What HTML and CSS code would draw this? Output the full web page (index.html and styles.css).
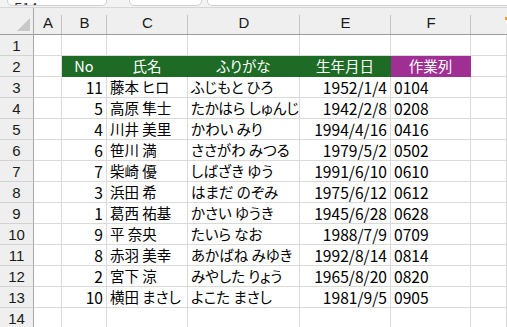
FILE: index.html
```html
<!DOCTYPE html>
<html lang="ja">
<head>
<meta charset="utf-8">
<link rel="stylesheet" href="styles.css">
</head>
<body>
<div class="topbar">
  <div class="box namebox"><span class="cut">E14</span></div>
  <div class="box fxbox"></div>
  <div class="box formula"></div>
</div>
<div class="sheet">
  <div class="corner"><span class="tri"></span></div>
  <div class="colhead">A</div>
  <div class="colhead">B</div>
  <div class="colhead">C</div>
  <div class="colhead">D</div>
  <div class="colhead">E</div>
  <div class="colhead">F</div>
  <div class="colhead last"><span class="mark"></span></div>

  <div class="rh">1</div><div class="c"></div><div class="c"></div><div class="c"></div><div class="c"></div><div class="c"></div><div class="c"></div><div class="c"></div>

  <div class="rh">2</div><div class="c"></div>
  <div class="c g ctr">No</div><div class="c g ctr">氏名</div><div class="c g ctr">ふりがな</div><div class="c g ctr">生年月日</div><div class="c p ctr">作業列</div><div class="c"></div>

  <div class="rh">3</div><div class="c"></div><div class="c r n">11</div><div class="c">藤本 ヒロ</div><div class="c">ふじもと ひろ</div><div class="c r n">1952/1/4</div><div class="c n">0104</div><div class="c"></div>
  <div class="rh">4</div><div class="c"></div><div class="c r n">5</div><div class="c">高原 隼士</div><div class="c">たかはら しゅんじ</div><div class="c r n">1942/2/8</div><div class="c n">0208</div><div class="c"></div>
  <div class="rh">5</div><div class="c"></div><div class="c r n">4</div><div class="c">川井 美里</div><div class="c">かわい みり</div><div class="c r n">1994/4/16</div><div class="c n">0416</div><div class="c"></div>
  <div class="rh">6</div><div class="c"></div><div class="c r n">6</div><div class="c">笹川 満</div><div class="c">ささがわ みつる</div><div class="c r n">1979/5/2</div><div class="c n">0502</div><div class="c"></div>
  <div class="rh">7</div><div class="c"></div><div class="c r n">7</div><div class="c">柴崎 優</div><div class="c">しばざき ゆう</div><div class="c r n">1991/6/10</div><div class="c n">0610</div><div class="c"></div>
  <div class="rh">8</div><div class="c"></div><div class="c r n">3</div><div class="c">浜田 希</div><div class="c">はまだ のぞみ</div><div class="c r n">1975/6/12</div><div class="c n">0612</div><div class="c"></div>
  <div class="rh">9</div><div class="c"></div><div class="c r n">1</div><div class="c">葛西 祐基</div><div class="c">かさい ゆうき</div><div class="c r n">1945/6/28</div><div class="c n">0628</div><div class="c"></div>
  <div class="rh">10</div><div class="c"></div><div class="c r n">9</div><div class="c">平 奈央</div><div class="c">たいら なお</div><div class="c r n">1988/7/9</div><div class="c n">0709</div><div class="c"></div>
  <div class="rh">11</div><div class="c"></div><div class="c r n">8</div><div class="c">赤羽 美幸</div><div class="c">あかばね みゆき</div><div class="c r n">1992/8/14</div><div class="c n">0814</div><div class="c"></div>
  <div class="rh">12</div><div class="c"></div><div class="c r n">2</div><div class="c">宮下 涼</div><div class="c">みやした りょう</div><div class="c r n">1965/8/20</div><div class="c n">0820</div><div class="c"></div>
  <div class="rh">13</div><div class="c"></div><div class="c r n">10</div><div class="c">横田 まさし</div><div class="c">よこた まさし</div><div class="c r n">1981/9/5</div><div class="c n">0905</div><div class="c"></div>
  <div class="rh">14</div><div class="c"></div><div class="c"></div><div class="c"></div><div class="c"></div><div class="c"></div><div class="c"></div><div class="c"></div>
</div>
</body>
</html>
```

FILE: styles.css
```css
* { box-sizing: border-box; }
html, body { margin: 0; padding: 0; }
body {
  width: 507px;
  height: 327px;
  overflow: hidden;
  background: #ffffff;
  font-family: "Noto Sans CJK JP", "Noto Sans", sans-serif;
  font-size: 15px;
  color: #000;
}
.topbar {
  height: 8px;
  background: #f3f3f3;
  border-bottom: 1px solid #d6d6d6;
  display: flex;
  align-items: flex-end;
  padding-bottom: 1px;
  overflow: hidden;
}
.box {
  height: 16px;
  background: #fff;
  border: 1px solid #d0d0d0;
  border-radius: 0 0 5px 5px;
  align-self: flex-end;
  overflow: hidden;
  position: relative;
}
.namebox { margin-left: 7px; width: 100px; }
.fxbox { margin-left: 22px; width: 73px; }
.formula { margin-left: 5px; flex: 1; border-right: none; border-radius: 0 0 0 5px; }
.cut {
  position: absolute;
  left: 6px;
  bottom: 0;
  font-size: 14px;
  line-height: 14px;
  color: #3a2a40;
  transform: translateY(10px);
}
.sheet {
  display: grid;
  grid-template-columns: 34px 28px 45px 81px 112px 91px 80px 1fr;
  grid-template-rows: 27px repeat(14, 21px);
}
.corner {
  background: #efefef;
  border-right: 1px solid #a8a8a8;
  border-bottom: 1px solid #9c9c9c;
  position: relative;
}
.tri {
  position: absolute;
  right: 3px;
  bottom: 3px;
  width: 0;
  height: 0;
  border-left: 13px solid transparent;
  border-bottom: 13px solid #c8c8c8;
}
.colhead {
  background: #efefef;
  border-bottom: 1px solid #9c9c9c;
  position: relative;
  display: flex;
  align-items: flex-end;
  justify-content: center;
  padding-bottom: 3px;
  font-family: "Liberation Sans", "Noto Sans", sans-serif;
  font-size: 15px;
  color: #1a1a1a;
}
.colhead::after {
  content: "";
  position: absolute;
  right: 0;
  top: 7px;
  bottom: 0;
  width: 1px;
  background: #c4c4c4;
}
.colhead.last::after { display: none; }
.mark {
  position: absolute;
  right: 0;
  top: 9px;
  width: 2px;
  height: 3px;
  background: #f0a030;
}
.rh {
  background: #efefef;
  border-right: 1px solid #a8a8a8;
  border-bottom: 1px solid #d2d2d2;
  display: flex;
  align-items: center;
  justify-content: center;
  font-family: "Liberation Sans", "Noto Sans", sans-serif;
  font-size: 15px;
  color: #1a1a1a;
}
.c {
  border-right: 1px solid #dadada;
  border-bottom: 1px solid #dadada;
  display: flex;
  align-items: center;
  padding: 0 3px;
  white-space: nowrap;
  overflow: hidden;
  line-height: 1;
  font-size: 14.5px;
  font-feature-settings: "palt" 1;
}
.c.n { font-size: 15.6px; font-feature-settings: normal; overflow: visible; line-height: 18px; }
.c.r { justify-content: flex-end; }
.c.ctr { justify-content: center; }
.c.g { background: #1e6b26; border-color: #1e6b26; color: #fff; }
.c.p { background: #a02f94; border-color: #a02f94; color: #fff; }
```
